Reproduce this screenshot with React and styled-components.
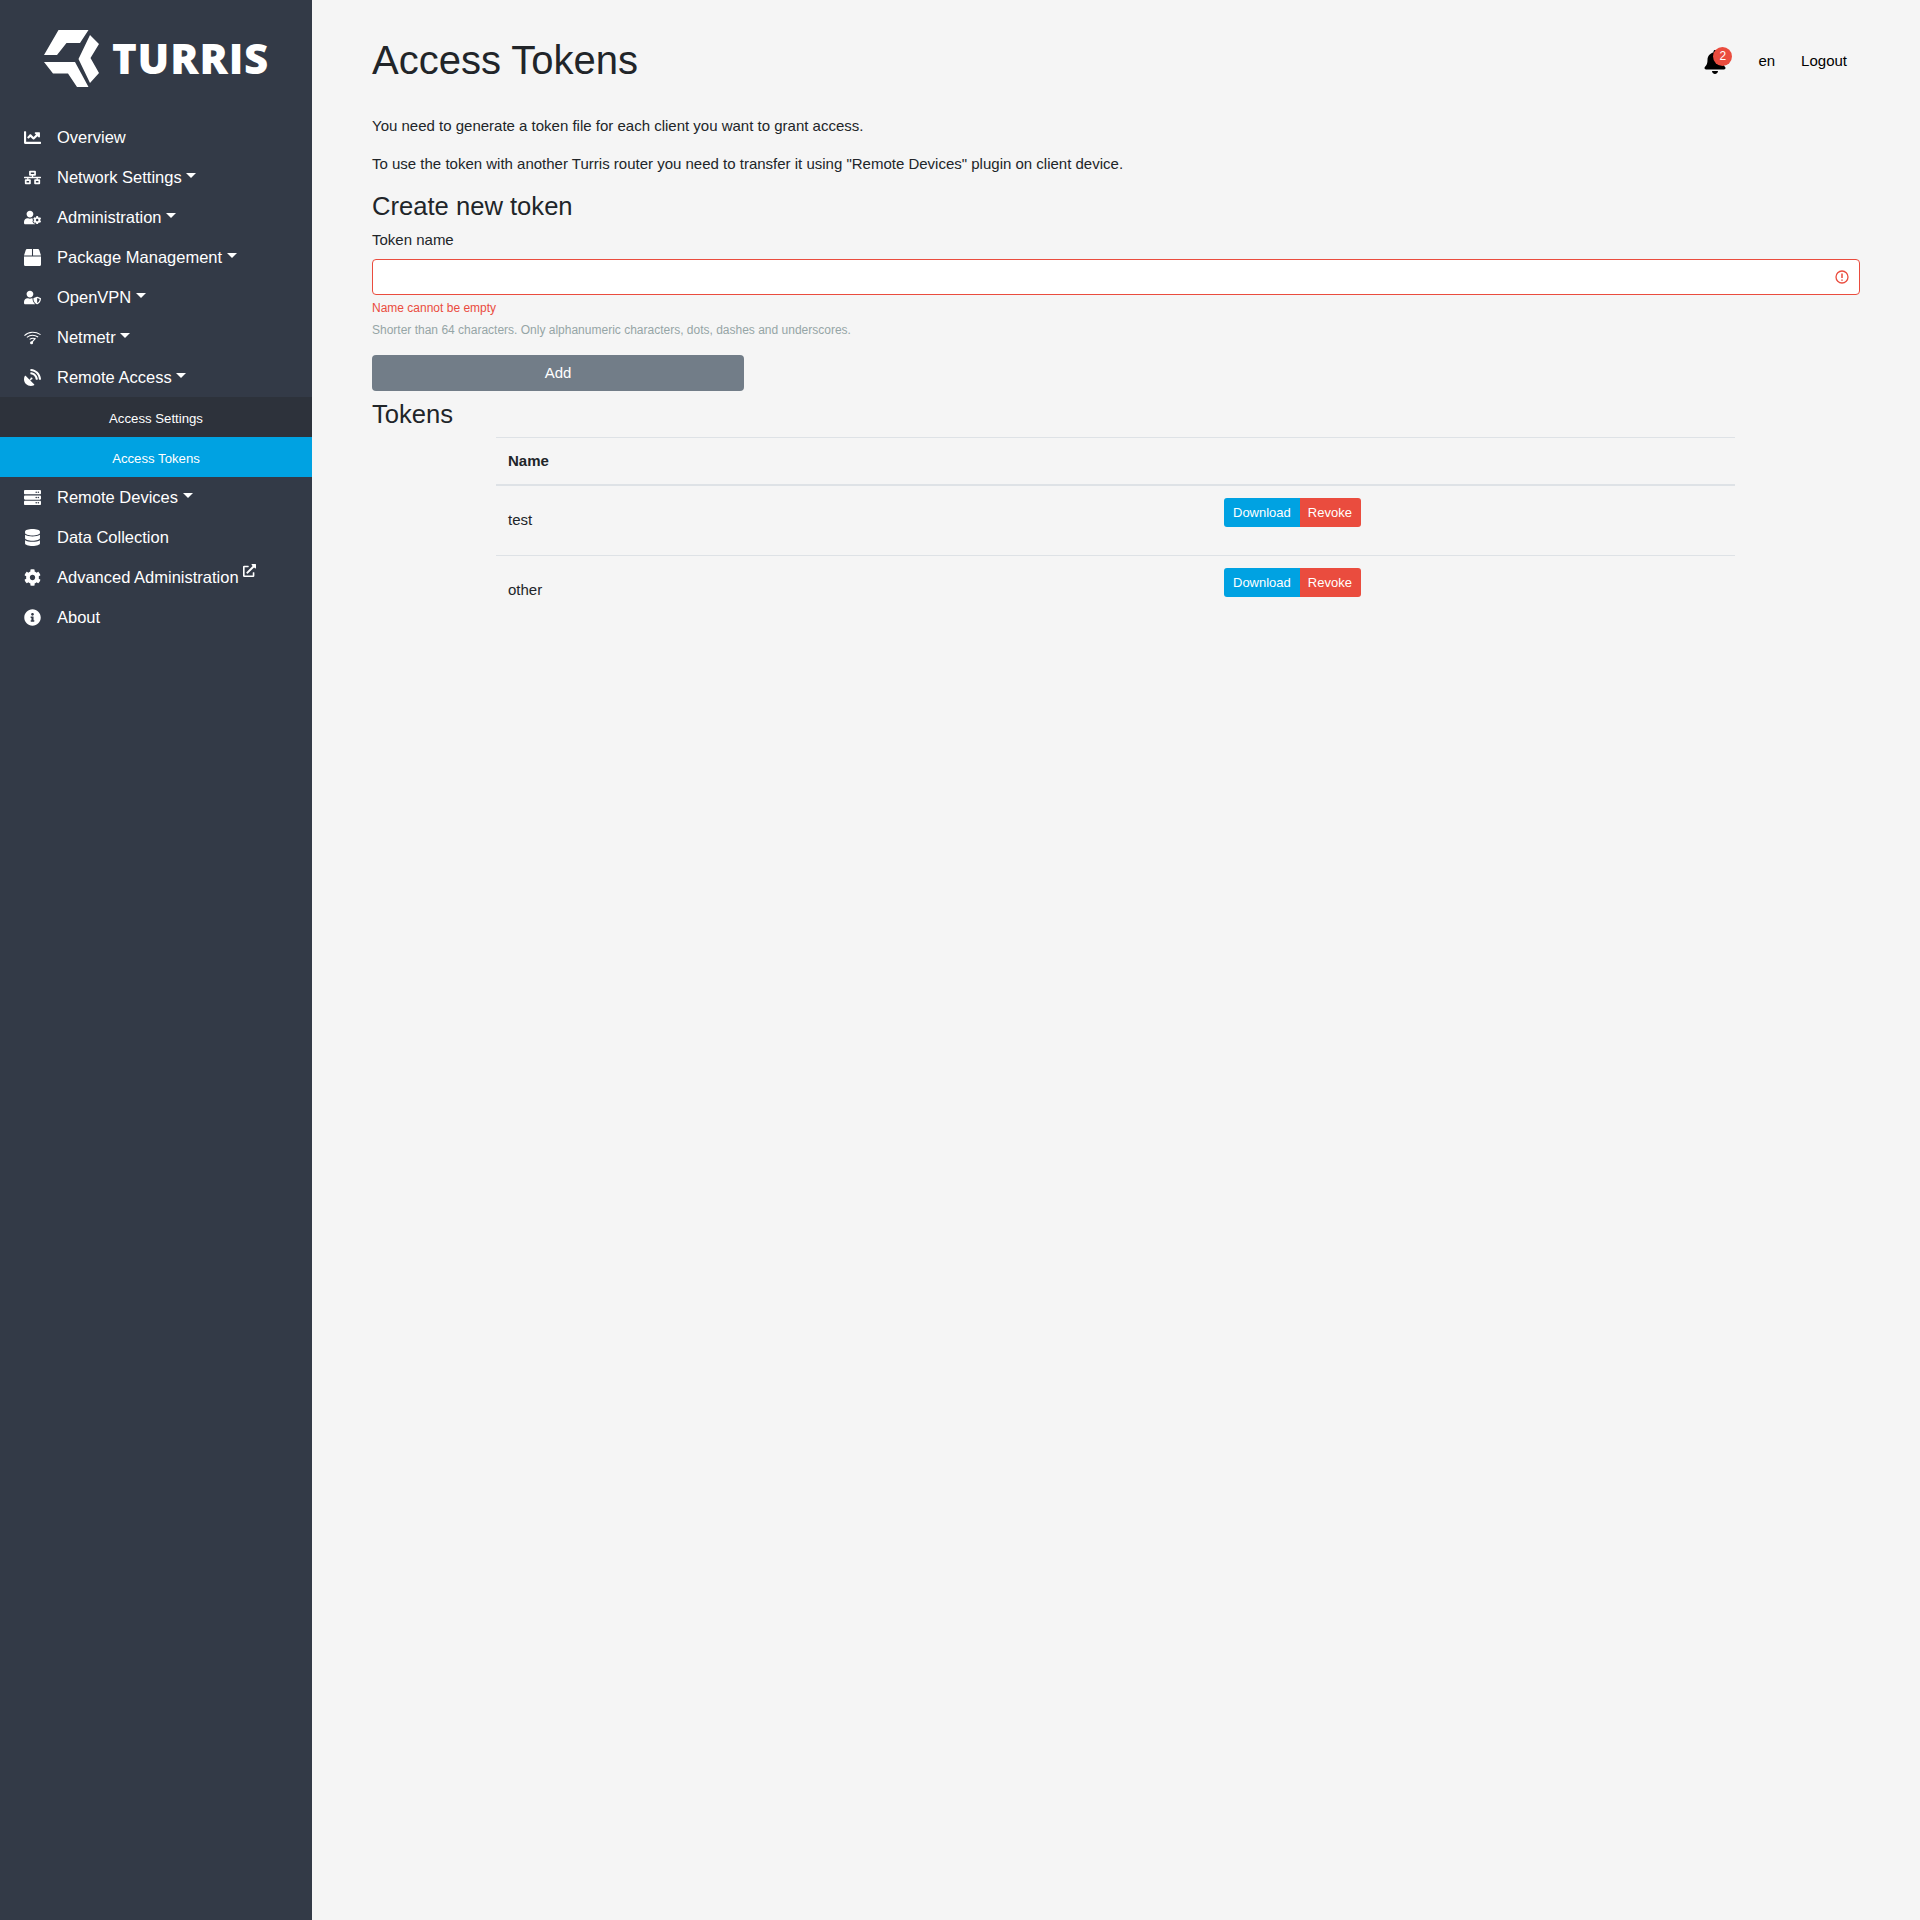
import React from 'react';
import styled, { createGlobalStyle } from 'styled-components';
import {
  FaChartLine, FaNetworkWired, FaUserCog, FaBox, FaUserShield, FaSatelliteDish,
  FaServer, FaDatabase, FaCog, FaInfoCircle, FaExternalLinkAlt, FaBell,
} from 'react-icons/fa';

const GlobalStyle = createGlobalStyle`
  html, body { margin: 0; padding: 0; background: #f5f5f5; }
  body { font-family: "Liberation Sans", Arial, sans-serif; color: #212529; font-size: 15px; line-height: 1.5; }
  * { box-sizing: border-box; }
`;

const Page = styled.div`
  display: flex;
  min-height: 1920px;
  width: 1920px;
`;

const Sidebar = styled.nav`
  width: 312px;
  flex: none;
  background: #333a47;
  color: #fff;
`;

const LogoRow = styled.div`
  height: 117px;
  padding: 30px 0 0 44px;
  display: flex;
  align-items: flex-start;
`;

const LogoText = styled.span`
  font-family: "Open Sans", sans-serif;
  font-weight: 800;
  font-size: 42px;
  line-height: 56px;
  margin-left: 12px;
  letter-spacing: 0.8px;
`;

const NavItem = styled.div`
  height: 40px;
  display: flex;
  align-items: center;
  padding-left: 24px;
  font-size: 16.5px;
  color: #fff;
`;

const NavIcon = styled.span`
  width: 17px;
  margin-right: 16px;
  display: flex;
  justify-content: center;
  font-size: 17px;
`;

const Caret = styled.span`
  margin-left: 4.5px;
  margin-bottom: 3px;
  border-top: 5px solid #fff;
  border-left: 5px solid transparent;
  border-right: 5px solid transparent;
`;

const ExternalMark = styled.span`
  margin-left: 4px;
  margin-bottom: 14px;
  font-size: 13px;
  display: flex;
`;

const SubItem = styled.div`
  height: 40px;
  padding-top: 3px;
  display: flex;
  align-items: center;
  justify-content: center;
  font-size: 13.2px;
  background: ${(p) => (p.$active ? '#00a2e2' : '#2d323b')};
  color: #fff;
`;

const Main = styled.main`
  flex: 1;
  padding: 0 60px;
`;

const TopRow = styled.header`
  height: 114px;
  display: flex;
  justify-content: space-between;
  padding-top: 30px;
`;

const PageTitle = styled.h1`
  margin: 0;
  font-size: 40px;
  font-weight: 400;
  line-height: 60px;
`;

const TopMenu = styled.div`
  display: flex;
  align-items: center;
  height: 62px;
  color: #000;
  padding-right: 13px;
`;

const BellWrap = styled.span`
  position: relative;
  font-size: 24px;
  display: flex;
  color: #000;
  margin-right: 31px;
  margin-top: 2px;
`;

const Badge = styled.span`
  position: absolute;
  top: -3px;
  left: 10px;
  width: 19px;
  height: 19px;
  border-radius: 50%;
  background: #ea4c3e;
  color: #fff;
  font-size: 12px;
  line-height: 19px;
  text-align: center;
`;

const MenuLink = styled.span`
  margin-left: ${(p) => p.$gap || 0}px;
`;

const Para = styled.p`
  margin: 0 0 15px;
  font-size: 15px;
  line-height: 23px;
`;

const SectionTitle = styled.h2`
  margin: 0 0 ${(p) => p.$after}px;
  font-size: 25.6px;
  font-weight: 400;
  line-height: 32px;
`;

const FieldLabel = styled.label`
  display: block;
  line-height: 23px;
  margin-bottom: 8px;
`;

const InputWrap = styled.div`
  height: 36px;
  border: 1px solid #ea4c3e;
  border-radius: 4px;
  background: #fff;
  display: flex;
  align-items: center;
  justify-content: flex-end;
  padding-right: 10px;
`;

const ErrorText = styled.div`
  color: #ea4c3e;
  font-size: 12px;
  line-height: 18px;
  margin-top: 4px;
`;

const HelpText = styled.div`
  color: #95a5a6;
  font-size: 12px;
  line-height: 18px;
  margin-top: 4px;
`;

const AddButton = styled.button`
  display: block;
  width: 372px;
  height: 36px;
  margin: 16px 0 7px;
  padding: 0 0 1px;
  border: 0;
  border-radius: 4px;
  background: #727d88;
  color: #fff;
  font: 15px "Liberation Sans", Arial, sans-serif;
`;

const TokenTable = styled.table`
  width: 1239px;
  margin-left: 124px;
  border-collapse: collapse;
  font-size: 15px;
  th, td { text-align: left; padding: 12px; vertical-align: top; line-height: 23px; }
  th { padding-top: 11px; border-top: 1px solid #dee2e6; border-bottom: 2px solid #dee2e6; font-weight: 700; }
  td { border-top: 1px solid #dee2e6; height: 70px; }
  td:first-child { padding-top: 22px; }
`;

const NameHead = styled.th`
  width: 716px;
`;

const ButtonGroup = styled.div`
  display: inline-flex;
  border-radius: 3px;
  overflow: hidden;
  vertical-align: top;
`;

const SmallButton = styled.button`
  height: 29px;
  padding: ${(p) => p.$pad};
  border: 0;
  background: ${(p) => p.$bg};
  color: #fff;
  font: 13px "Liberation Sans", Arial, sans-serif;
`;

function NetmetrIcon() {
  return (
    <svg width="18" height="16" viewBox="0 0 18 16" fill="none" stroke="#fff" strokeWidth="1.1">
      <path d="M0.5 6.5C5 2 12 2 17.5 5.5" />
      <path d="M3 8.5C6.5 5.5 11 5.5 15 8" />
      <path d="M6 10.5C8 9 10.5 9 12.5 10" />
      <circle cx="8" cy="14" r="1.6" fill="#fff" stroke="none" />
      <path d="M8 14L11.5 10" strokeWidth="1.2" />
    </svg>
  );
}

const nav = [
  { Icon: FaChartLine, label: 'Overview' },
  { Icon: FaNetworkWired, label: 'Network Settings', caret: true },
  { Icon: FaUserCog, label: 'Administration', caret: true },
  { Icon: FaBox, label: 'Package Management', caret: true },
  { Icon: FaUserShield, label: 'OpenVPN', caret: true },
  { Icon: NetmetrIcon, label: 'Netmetr', caret: true },
  { Icon: FaSatelliteDish, label: 'Remote Access', caret: true },
];

const nav2 = [
  { Icon: FaServer, label: 'Remote Devices', caret: true },
  { Icon: FaDatabase, label: 'Data Collection' },
  { Icon: FaCog, label: 'Advanced Administration', external: true },
  { Icon: FaInfoCircle, label: 'About' },
];

function Entry({ Icon, label, caret, external }) {
  return (
    <NavItem>
      <NavIcon><Icon /></NavIcon>
      <span>{label}</span>
      {caret && <Caret />}
      {external && <ExternalMark><FaExternalLinkAlt /></ExternalMark>}
    </NavItem>
  );
}

function Logo() {
  return (
    <svg width="56" height="58" viewBox="0 0 56 58" fill="#fff">
      <polygon points="14.5,0 44.5,0 36,13 22.5,13 13,25 0,25" />
      <polygon points="46,5 55,14 46.5,28 55,43 46,53 34.5,29" />
      <polygon points="0,32 31,32 44.5,57 33,57 24,43.5 9,43.5" />
    </svg>
  );
}

function TokenRow({ name }) {
  return (
    <tr>
      <td>{name}</td>
      <td>
        <ButtonGroup>
          <SmallButton $bg="#00a2e2" $pad="0 9px">Download</SmallButton>
          <SmallButton $bg="#ea4c3e" $pad="0 9.5px 0 8px">Revoke</SmallButton>
        </ButtonGroup>
      </td>
    </tr>
  );
}

export default function App() {
  return (
    <Page>
      <GlobalStyle />
      <Sidebar>
        <LogoRow>
          <Logo />
          <LogoText>TURRIS</LogoText>
        </LogoRow>
        {nav.map((n) => <Entry key={n.label} {...n} />)}
        <SubItem>Access Settings</SubItem>
        <SubItem $active>Access Tokens</SubItem>
        {nav2.map((n) => <Entry key={n.label} {...n} />)}
      </Sidebar>
      <Main>
        <TopRow>
          <PageTitle>Access Tokens</PageTitle>
          <TopMenu>
            <BellWrap><FaBell /><Badge>2</Badge></BellWrap>
            <MenuLink>en</MenuLink>
            <MenuLink $gap={26}>Logout</MenuLink>
          </TopMenu>
        </TopRow>
        <Para>You need to generate a token file for each client you want to grant access.</Para>
        <Para>To use the token with another Turris router you need to transfer it using "Remote Devices" plugin on client device.</Para>
        <SectionTitle $after={6}>Create new token</SectionTitle>
        <FieldLabel>Token name</FieldLabel>
        <InputWrap>
          <svg width="14" height="14" viewBox="0 0 14 14" fill="none" stroke="#ea4c3e" strokeWidth="1.3">
            <circle cx="7" cy="7" r="6" />
            <path d="M7 3.5v4.5M7 9.5v1.2" strokeWidth="1.5" />
          </svg>
        </InputWrap>
        <ErrorText>Name cannot be empty</ErrorText>
        <HelpText>Shorter than 64 characters. Only alphanumeric characters, dots, dashes and underscores.</HelpText>
        <AddButton>Add</AddButton>
        <SectionTitle $after={7}>Tokens</SectionTitle>
        <TokenTable>
          <thead>
            <tr><NameHead>Name</NameHead><th /></tr>
          </thead>
          <tbody>
            <TokenRow name="test" />
            <TokenRow name="other" />
          </tbody>
        </TokenTable>
      </Main>
    </Page>
  );
}
